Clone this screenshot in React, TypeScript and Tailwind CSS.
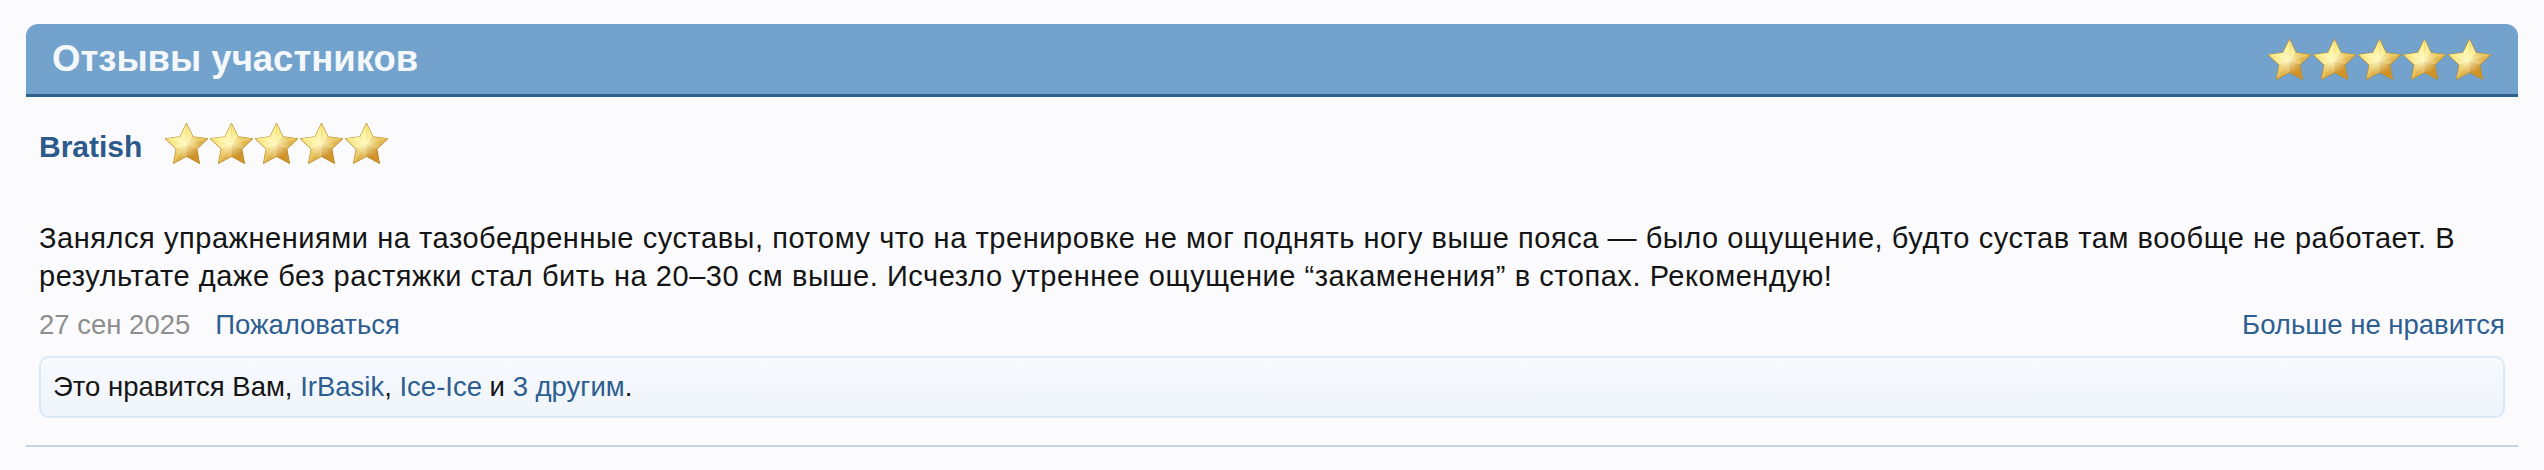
import { useId } from 'react'

// star drawn as ten bevel faces, lit from the top left
const CX = 50
const CY = 52
const pt = (deg: number, r: number) => {
  const a = (deg * Math.PI) / 180
  return [CX + r * Math.cos(a), CY + r * Math.sin(a)]
}
const outer = [0, 1, 2, 3, 4].map((k) => pt(-90 + 72 * k, 49))
const inner = [0, 1, 2, 3, 4].map((k) => pt(-54 + 72 * k, 24))

const mix = (a: number[], b: number[], t: number) =>
  `rgb(${a.map((v, i) => Math.round(v + (b[i] - v) * t)).join(',')})`
const DARK = [204, 142, 36]
const LIGHT = [255, 244, 150]
const LX = -0.55
const LY = -0.83

const faces = outer.flatMap((o, k) => {
  const prev = inner[(k + 4) % 5]
  const next = inner[k]
  return [prev, next].map((p) => {
    const mx = (o[0] + p[0]) / 2 - CX
    const my = (o[1] + p[1]) / 2 - CY
    const len = Math.hypot(mx, my)
    const t = ((mx / len) * LX + (my / len) * LY + 1) / 2
    return {
      points: `${CX},${CY} ${o[0].toFixed(1)},${o[1].toFixed(1)} ${p[0].toFixed(1)},${p[1].toFixed(1)}`,
      fill: mix(DARK, LIGHT, Math.pow(t, 0.7)),
    }
  })
})

const outline = outer
  .flatMap((o, k) => [o, inner[k]])
  .map((p) => `${p[0].toFixed(1)},${p[1].toFixed(1)}`)
  .join(' ')

function Star() {
  const id = useId()
  return (
    <svg width="45" height="43" viewBox="0 0 100 95" className="shrink-0">
      <defs>
        <radialGradient id={`${id}g`} cx="46%" cy="52%" r="35%">
          <stop offset="0%" stopColor="#fffbd0" stopOpacity="0.85" />
          <stop offset="100%" stopColor="#fffbd0" stopOpacity="0" />
        </radialGradient>
        <filter id={`${id}b`} x="-10%" y="-10%" width="120%" height="120%">
          <feGaussianBlur stdDeviation="0.9" />
        </filter>
      </defs>
      <g filter={`url(#${id}b)`}>
        <polygon points={outline} fill="#e0a935" stroke="#b8862a" strokeWidth="2.5" strokeLinejoin="round" />
        {faces.map((f, i) => (
          <polygon key={i} points={f.points} fill={f.fill} />
        ))}
        <polygon points={outline} fill={`url(#${id}g)`} />
      </g>
    </svg>
  )
}

function Stars() {
  return (
    <div className="flex items-center">
      {[0, 1, 2, 3, 4].map((i) => (
        <Star key={i} />
      ))}
    </div>
  )
}

export default function App() {
  return (
    <div
      className="min-h-screen bg-[#fbfbfe] px-[26px] pt-[24px] text-[#141414]"
      style={{ fontFamily: '"Liberation Sans", Arial, sans-serif' }}
    >
      <div className="flex h-[73px] items-center justify-between rounded-t-[12px] border-b-[3px] border-[#2f5f8e] bg-[#73a3cc] px-[26px]">
        <h2 className="text-[36.5px] font-bold leading-none text-[#f4f8fc]">Отзывы участников</h2>
        <Stars />
      </div>

      <div className="px-[13px]">
        <div className="mt-[24px] flex h-[44px] items-center gap-[22px]">
          <span className="mt-[7px] text-[30px] font-bold leading-[30px] text-[#2c5a8a]">Bratish</span>
          <Stars />
        </div>

        <p className="mt-[54px] text-[29px] leading-[38px] tracking-[0.55px]">
          Занялся упражнениями на тазобедренные суставы, потому что на тренировке не мог поднять ногу выше пояса — было
          ощущение, будто сустав там вообще не работает. В результате даже без растяжки стал бить на 20–30 см выше.
          Исчезло утреннее ощущение “закаменения” в стопах. Рекомендую!
        </p>

        <div className="mt-[11px] flex items-center justify-between text-[27.5px] leading-[38px]">
          <div className="flex items-center gap-[25px]">
            <span className="text-[#8e8e8e]">27 сен 2025</span>
            <a className="text-[#2d5e91]">Пожаловаться</a>
          </div>
          <a className="text-[#2d5e91]">Больше не нравится</a>
        </div>

        <div className="mt-[12px] flex h-[62px] items-center rounded-[10px] border-2 border-[#d9e9f8] bg-gradient-to-b from-[#f8fafd] to-[#eef4fa] px-[12px] text-[27.5px] leading-[38px]">
          <span>
            Это нравится Вам, <a className="text-[#2d5e91]">IrBasik</a>, <a className="text-[#2d5e91]">Ice-Ice</a> и{' '}
            <a className="text-[#2d5e91]">3 другим</a>.
          </span>
        </div>
      </div>

      <div className="mt-[27px] h-[2px] bg-[#c6d4e1]" />
    </div>
  )
}
